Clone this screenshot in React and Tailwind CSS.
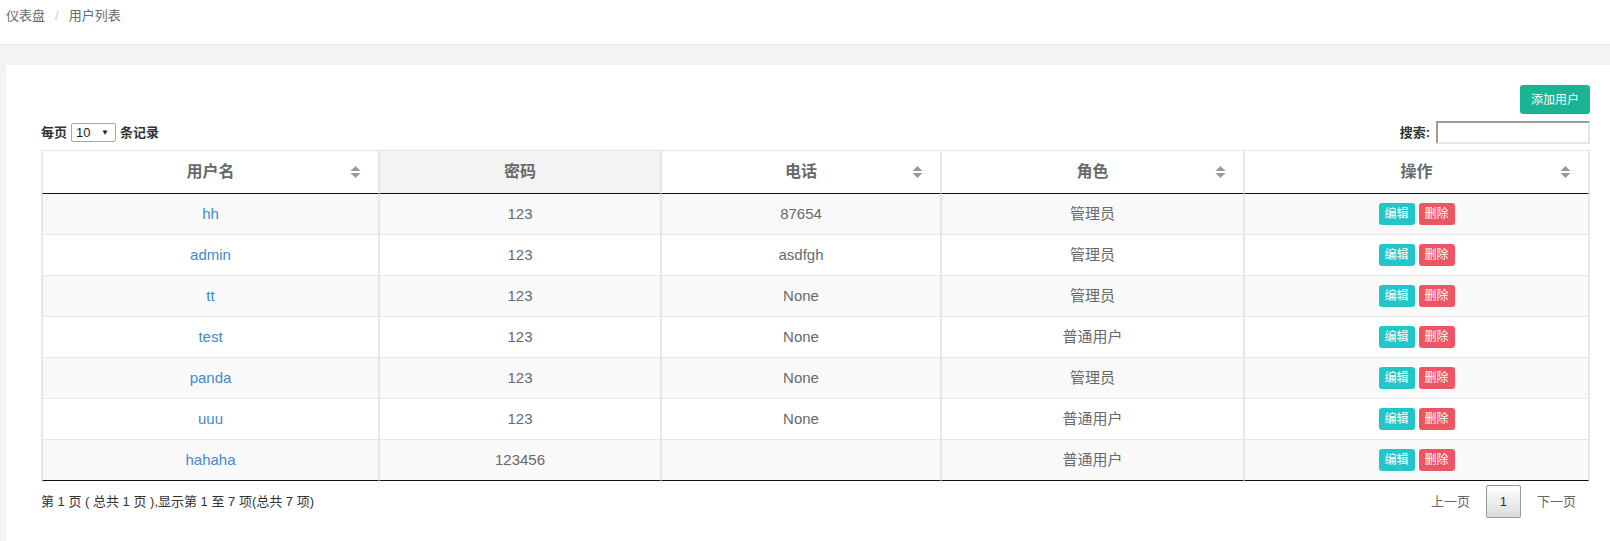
import React from 'react';

const users = [
  { name: 'hh', password: '123', phone: '87654', role: '管理员' },
  { name: 'admin', password: '123', phone: 'asdfgh', role: '管理员' },
  { name: 'tt', password: '123', phone: 'None', role: '管理员' },
  { name: 'test', password: '123', phone: 'None', role: '普通用户' },
  { name: 'panda', password: '123', phone: 'None', role: '管理员' },
  { name: 'uuu', password: '123', phone: 'None', role: '普通用户' },
  { name: 'hahaha', password: '123456', phone: '', role: '普通用户' },
];

const columns = [
  { label: '用户名', width: 'w-[337px]', sortable: true },
  { label: '密码', width: 'w-[282px]', sortable: false },
  { label: '电话', width: 'w-[280px]', sortable: true },
  { label: '角色', width: 'w-[303px]', sortable: true },
  { label: '操作', width: 'w-[345px]', sortable: true },
];

const SortIcon = () => (
  <svg width="11" height="13" viewBox="0 0 11 13" className="absolute right-[17px] top-1/2 -translate-y-1/2">
    <path d="M5.5 0.5 L10.5 5.5 L0.5 5.5 Z" fill="#9a9a9a" />
    <path d="M0.5 7.5 L10.5 7.5 L5.5 12.5 Z" fill="#9a9a9a" />
  </svg>
);

const App = () => {
  return (
    <div className="min-h-[541px] bg-[#f3f3f4] font-['Liberation_Sans','Noto_Sans_CJK_SC',sans-serif] text-[#676a6c]">
      {/* breadcrumb */}
      <div className="h-[45px] bg-white border-b border-[#e7eaec] px-[6px] pt-[8px] text-[13px] leading-[16px]">
        <span>仪表盘</span>
        <span className="px-[10px] text-[#ccc]">/</span>
        <span>用户列表</span>
      </div>

      <div className="ml-[6px] mt-[20px] bg-white pl-[35px] pr-[20px] pt-[20px] pb-[40px]">
        <div className="flex justify-end">
          <button className="h-[29px] w-[70px] rounded-[3px] bg-[#1ab394] text-[12px] text-white">
            添加用户
          </button>
        </div>

        <div className="mt-[7px] flex h-[23px] items-center justify-between text-[13px] font-bold text-[#333]">
          <div className="flex items-center">
            <span>每页</span>
            <div className="mx-[4px] flex h-[19px] w-[45px] items-center justify-between rounded-[2px] border border-[#a9a9a9] bg-white pl-[4px] pr-[6px] font-normal text-[#222]">
              <span className="text-[13px]">10</span>
              <span className="text-[8px]">▼</span>
            </div>
            <span>条记录</span>
          </div>
          <div className="flex items-center">
            <span>搜索:</span>
            <input
              type="text"
              className="ml-[6px] h-[23px] w-[154px] border-2 border-t-[#9a9a9a] border-l-[#9a9a9a] border-r-[#e6e6e6] border-b-[#e6e6e6] bg-white outline-none"
            />
          </div>
        </div>

        <table className="mt-[6px] mr-[2px] w-[1547px] table-fixed border-separate border-spacing-0 border-l border-r border-[#e7e7e7]">
          <colgroup>
            {columns.map((c) => (
              <col key={c.label} className={c.width} />
            ))}
          </colgroup>
          <thead>
            <tr>
              {columns.map((c) => (
                <th
                  key={c.label}
                  className={`relative h-[44px] border-t border-b border-x border-t-[#e7e7e7] border-x-[#e7e7e7] border-b-[#111] p-0 text-center text-[16px] font-bold text-[#676a6c] ${
                    c.sortable ? 'bg-white' : 'bg-[#f3f3f3]'
                  }`}
                >
                  {c.label}
                  {c.sortable && <SortIcon />}
                </th>
              ))}
            </tr>
          </thead>
          <tbody>
            {users.map((u, i) => {
              const last = i === users.length - 1;
              const cell = `h-[41px] border-x border-b p-0 text-center text-[15px] border-x-[#e7e7e7] ${
                last ? 'border-b-[#111]' : 'border-b-[#e7e7e7]'
              }`;
              return (
                <tr key={u.name} className={i % 2 === 0 ? 'bg-[#f9f9f9]' : 'bg-white'}>
                  <td className={cell}>
                    <a className="text-[#428bca]" href="#">
                      {u.name}
                    </a>
                  </td>
                  <td className={cell}>{u.password}</td>
                  <td className={cell}>{u.phone}</td>
                  <td className={cell}>{u.role}</td>
                  <td className={cell}>
                    <div className="flex items-center justify-center gap-[4px]">
                      <button className="h-[22px] w-[36px] rounded-[3px] bg-[#23c6c8] text-[12px] text-white">
                        编辑
                      </button>
                      <button className="h-[22px] w-[36px] rounded-[3px] bg-[#ed5565] text-[12px] text-white">
                        删除
                      </button>
                    </div>
                  </td>
                </tr>
              );
            })}
          </tbody>
        </table>

        <div className="mr-[2px] mt-[4px] flex items-center justify-between text-[13px] text-[#333]">
          <div>第 1 页 ( 总共 1 页 ),显示第 1 至 7 项(总共 7 项)</div>
          <div className="flex items-center">
            <span className="px-[12px] text-[#666]">上一页</span>
            <span className="ml-[4px] flex h-[33px] w-[35px] items-center justify-center rounded-[2px] border border-[#979797] bg-gradient-to-b from-white to-[#dcdcdc] text-[#333]">
              1
            </span>
            <span className="ml-[4px] px-[12px] text-[#666]">下一页</span>
          </div>
        </div>
      </div>
    </div>
  );
};

export default App;
